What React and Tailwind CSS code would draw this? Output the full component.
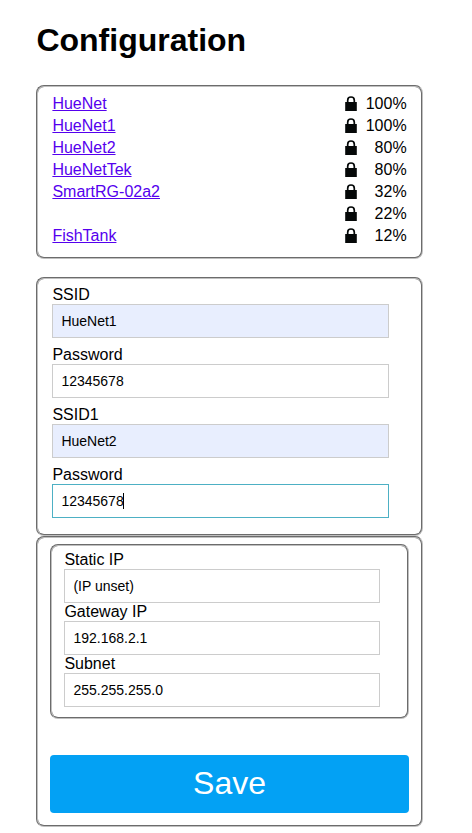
const networks = [
  ["HueNet", 100],
  ["HueNet1", 100],
  ["HueNet2", 80],
  ["HueNetTek", 80],
  ["SmartRG-02a2", 32],
  ["", 22],
  ["FishTank", 12],
];

const panel = "rounded-lg border-2 [border-style:groove] border-[#c0c0c0]";

function Lock() {
  return (
    <svg className="h-[15px] w-3 -mt-px" viewBox="0 0 12 15" aria-hidden="true">
      <path d="M2.7 7V4.2a3.3 3.2 0 0 1 6.6 0V7" fill="none" stroke="#050808" strokeWidth="1.7" />
      <rect x="0.2" y="6" width="11.6" height="9" fill="#050808" />
    </svg>
  );
}

function Field({ label, value, width, filled, active }) {
  return (
    <label className="block">
      <span className="block h-[18px] pl-[0.4px] leading-[18px]">{label}</span>
      <span className={`relative block h-[34px] ${width}`}>
        <input
          defaultValue={value}
          className={`block h-full w-full border pl-[8.4px] pr-2 text-sm outline-none ${filled ? "bg-[#e8eefe]" : "bg-white"} ${active ? "border-[#4db0c4]" : "border-[#cccccc]"}`}
        />
        {active && <span className="absolute left-[71px] top-[9px] h-4 w-px bg-black" />}
      </span>
    </label>
  );
}

export default function App() {
  return (
    <main className="h-[833px] w-[472px] overflow-hidden bg-white pl-9 pt-[22px] font-['Liberation_Sans',Arial,sans-serif] text-base text-black">
      <h1 className="h-[37px] pl-[0.4px] text-[32px] font-bold leading-[37px]">Configuration</h1>

      <section className={`mt-[26px] h-[174px] w-[387px] pl-[14.4px] pr-[14.4px] pt-[6px] ${panel}`}>
        {networks.map(([name, strength]) => (
          <div key={strength + name} className="flex h-[22px] items-center leading-[22px]">
            <a href="#" className="flex-1 text-[#5500ee] underline">{name}</a>
            <Lock />
            <span className="w-[50px] text-right">{strength}%</span>
          </div>
        ))}
      </section>

      <section className={`mt-[18px] flex h-[259px] w-[387px] flex-col gap-2 pl-[14px] pt-[7px] ${panel}`}>
        <Field label="SSID" value="HueNet1" width="w-[337px]" filled />
        <Field label="Password" value="12345678" width="w-[337px]" />
        <Field label="SSID1" value="HueNet2" width="w-[337px]" filled />
        <Field label="Password" value="12345678" width="w-[337px]" active />
      </section>

      <section className={`h-[291px] w-[387px] px-3 pt-[6px] ${panel}`}>
        <div className={`h-[175px] w-[359px] pl-3 pt-[5px] ${panel}`}>
          <Field label="Static IP" value="(IP unset)" width="w-[316px]" />
          <Field label="Gateway IP" value="192.168.2.1" width="w-[316px]" />
          <Field label="Subnet" value="255.255.255.0" width="w-[316px]" />
        </div>
        <button className="mt-9 block h-[58px] w-[359px] rounded bg-[#03a1f4] pb-[2px] text-[32px] leading-[56px] text-white">
          Save
        </button>
      </section>
    </main>
  );
}
